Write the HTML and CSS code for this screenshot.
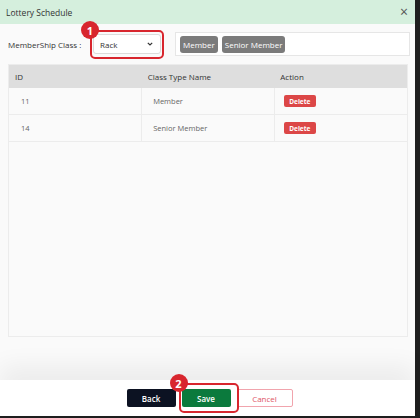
FILE: index.html
```html
<!DOCTYPE html>
<html lang="en">
<head>
    <meta charset="UTF-8">
    <meta name="viewport" content="width=device-width, initial-scale=1.0">
    <title>Lottery Schedule</title>
    <link rel="stylesheet" href="styles.css">
</head>
<body>
    <div class="modal">
        <header class="modal-header">
            <h1>Lottery Schedule</h1>
            <span class="close">&times;</span>
        </header>
        <main class="modal-body">
            <div class="form-row">
                <label>MemberShip Class :</label>
                <div class="select-wrap">
                    <div class="select">
                        <span>Rack</span>
                        <svg width="6" height="4" viewBox="0 0 6 4"><path d="M0.8 0.8 L3 3 L5.2 0.8" fill="none" stroke="#333" stroke-width="1.2"/></svg>
                    </div>
                    <div class="mark"><span class="badge">1</span></div>
                </div>
                <div class="chips">
                    <span class="chip">Member</span>
                    <span class="chip">Senior Member</span>
                </div>
            </div>
            <div class="table-box">
                <table>
                    <thead>
                        <tr><th>ID</th><th>Class Type Name</th><th>Action</th></tr>
                    </thead>
                    <tbody>
                        <tr><td>11</td><td>Member</td><td><button class="btn-delete">Delete</button></td></tr>
                        <tr><td>14</td><td>Senior Member</td><td><button class="btn-delete">Delete</button></td></tr>
                    </tbody>
                </table>
            </div>
        </main>
        <footer class="modal-footer">
            <button class="btn btn-back">Back</button>
            <div class="save-wrap">
                <button class="btn btn-save">Save</button>
                <div class="mark mark-save"><span class="badge">2</span></div>
            </div>
            <button class="btn btn-cancel">Cancel</button>
        </footer>
    </div>
</body>
</html>
```

FILE: styles.css
```css
body {
    margin: 0;
    padding: 0;
    background-color: #1f1f1f;
    font-family: "Open Sans", "Noto Sans", sans-serif;
    width: 420px;
    height: 418px;
    overflow: hidden;
}
.modal {
    width: 415px;
    height: 416px;
    display: flex;
    flex-direction: column;
    background-color: #fafafa;
}
.modal-header {
    height: 24px;
    background-color: #d5efdd;
    display: flex;
    align-items: center;
    justify-content: space-between;
    padding: 0 7px 0 6px;
    box-sizing: border-box;
}
h1 {
    margin: 0;
    font-size: 8.5px;
    font-weight: 400;
    color: #333;
}
.close {
    font-size: 14px;
    color: #555;
    line-height: 1;
}
.modal-body {
    flex: 1;
    display: flex;
    flex-direction: column;
    padding: 8px 5px 0 8px;
    background-color: #fafafa;
}
.form-row {
    display: flex;
    align-items: center;
    height: 24px;
    margin-bottom: 8px;
}
.form-row label {
    font-size: 8px;
    color: #333;
    width: 85px;
}
.select-wrap {
    position: relative;
}
.select {
    width: 68px;
    height: 20px;
    box-sizing: border-box;
    border: 1px solid #dcdcdc;
    border-radius: 3px;
    background-color: #fff;
    display: flex;
    align-items: center;
    justify-content: space-between;
    padding: 0 7px 0 6px;
    font-size: 8px;
    color: #333;
}
.mark {
    position: absolute;
    left: -3px;
    right: -3px;
    top: -4px;
    bottom: -5px;
    border: 2px solid #d8262e;
    border-radius: 5px;
}
.badge {
    position: absolute;
    left: -11px;
    top: -11px;
    width: 18px;
    height: 18px;
    border-radius: 50%;
    background-color: #d8262e;
    color: #fff;
    font-size: 11px;
    font-weight: 700;
    display: flex;
    align-items: center;
    justify-content: center;
}
.chips {
    margin-left: 14px;
    flex: 1;
    height: 24px;
    box-sizing: border-box;
    border: 1px solid #e6e6e6;
    background-color: #fff;
    display: flex;
    align-items: center;
    gap: 4px;
    padding-left: 4px;
}
.chip {
    background-color: #7b7b7b;
    color: #fff;
    font-size: 8px;
    border-radius: 3px;
    padding: 3px 3px;
}
.table-box {
    height: 273px;
    margin-right: 2px;
    border: 1px solid #ececec;
    box-sizing: border-box;
    background-color: #fafafa;
}
table {
    width: 100%;
    border-collapse: collapse;
    table-layout: fixed;
}
th {
    background-color: #dedede;
    height: 23px;
    text-align: left;
    font-size: 8px;
    font-weight: 400;
    color: #333;
    padding: 0 6px;
}
td {
    height: 26px;
    font-size: 7.5px;
    color: #666;
    padding: 0 12px;
    border-bottom: 1px solid #ececec;
    border-right: 1px solid #ececec;
}
td:last-child {
    border-right: none;
    padding-left: 9px;
}
td:nth-child(2) {
    padding-left: 11px;
}
.btn-delete {
    border: none;
    background-color: #dc4747;
    color: #fff;
    font-family: inherit;
    font-size: 6.5px;
    font-weight: 700;
    border-radius: 2px;
    width: 32px;
    height: 12px;
    padding: 0;
}
.modal-footer {
    height: 36px;
    background-color: #fff;
    display: flex;
    align-items: center;
    justify-content: center;
    gap: 6px;
    padding-left: 4px;
    box-shadow: 0 -14px 24px rgba(0, 0, 0, 0.06);
}
.btn {
    height: 18px;
    font-family: inherit;
    font-size: 8px;
    border-radius: 2px;
    padding: 0;
}
.btn-back {
    width: 49px;
    border: none;
    background-color: #0c1222;
    color: #fff;
    font-weight: 600;
}
.save-wrap {
    position: relative;
}
.btn-save {
    width: 49px;
    border: none;
    background-color: #0b7a3d;
    color: #fff;
    font-weight: 600;
    display: block;
}
.mark-save {
    left: -3px;
    right: -8px;
    top: -6px;
    bottom: -6px;
}
.btn-cancel {
    width: 56px;
    border: 1px solid #f1a4ad;
    background-color: #fff;
    color: #e05566;
}
```
